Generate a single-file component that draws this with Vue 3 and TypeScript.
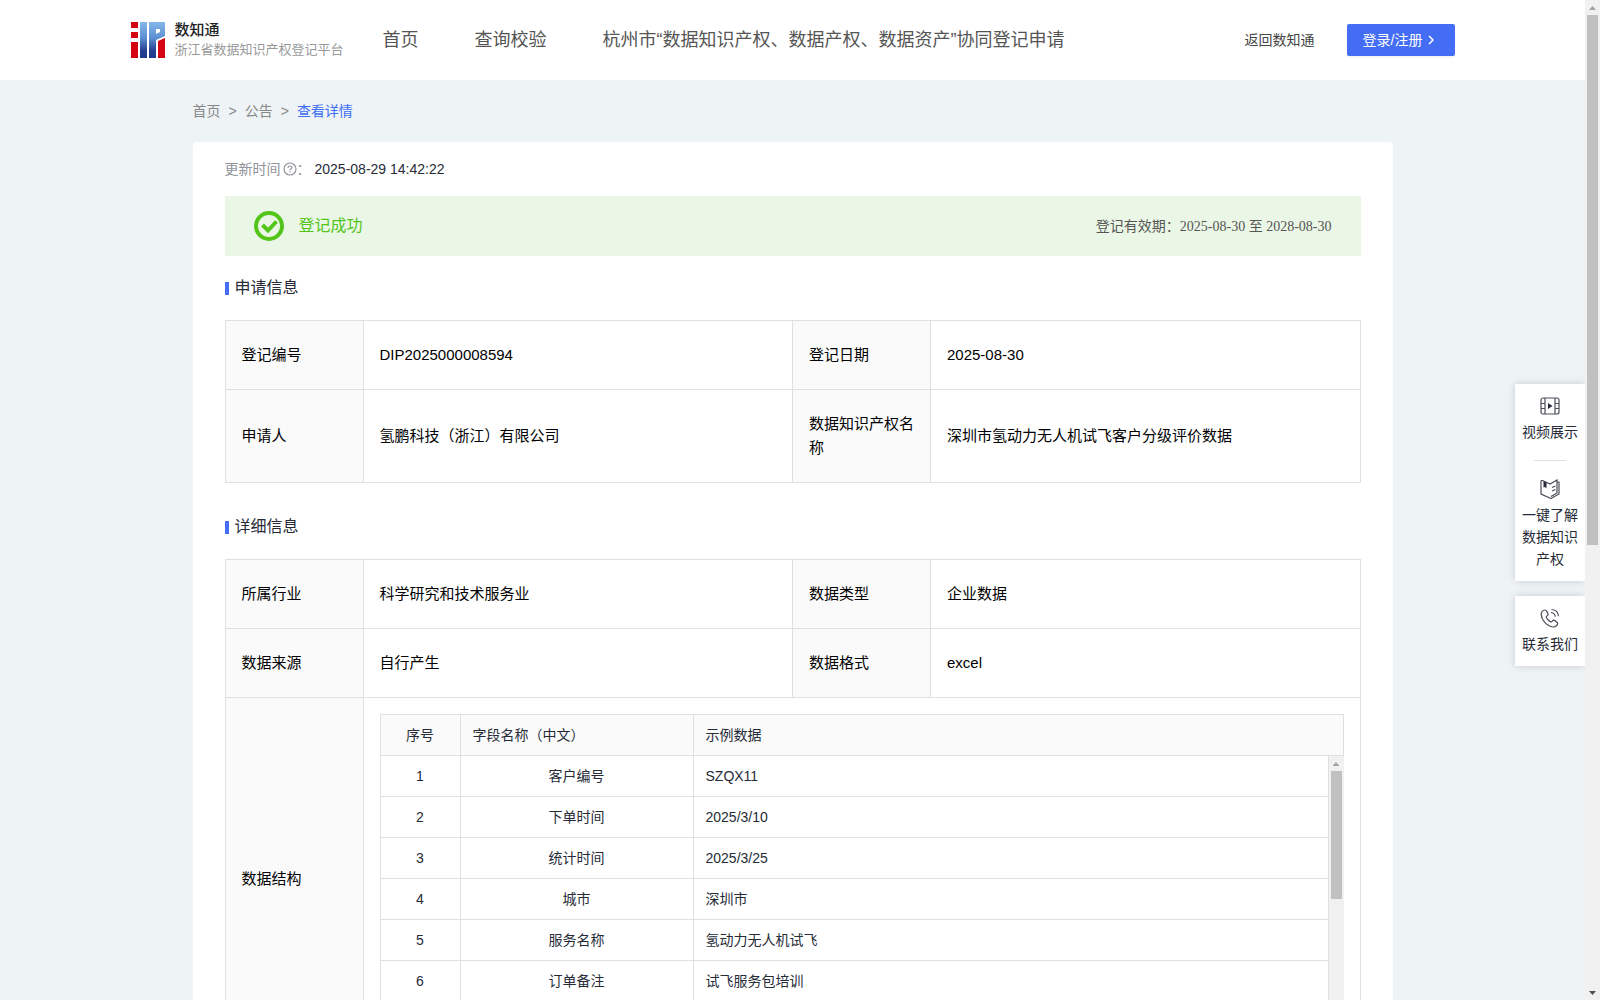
<script setup lang="ts">
interface InfoRow {
  cells: [string, string][]
}

interface FieldRow {
  id: number
  name: string
  sample: string
}

const navItems: string[] = ['首页', '查询校验', '杭州市“数据知识产权、数据产权、数据资产”协同登记申请']

const applyRows: InfoRow[] = [
  { cells: [['登记编号', 'DIP2025000008594'], ['登记日期', '2025-08-30']] },
  { cells: [['申请人', '氢鹏科技（浙江）有限公司'], ['数据知识产权名称', '深圳市氢动力无人机试飞客户分级评价数据']] },
]

const detailRows: InfoRow[] = [
  { cells: [['所属行业', '科学研究和技术服务业'], ['数据类型', '企业数据']] },
  { cells: [['数据来源', '自行产生'], ['数据格式', 'excel']] },
]

const fields: FieldRow[] = [
  { id: 1, name: '客户编号', sample: 'SZQX11' },
  { id: 2, name: '下单时间', sample: '2025/3/10' },
  { id: 3, name: '统计时间', sample: '2025/3/25' },
  { id: 4, name: '城市', sample: '深圳市' },
  { id: 5, name: '服务名称', sample: '氢动力无人机试飞' },
  { id: 6, name: '订单备注', sample: '试飞服务包培训' },
]
</script>

<template>
  <div class="app">
    <div class="page">
      <header class="header">
        <div class="header-inner">
          <a class="brand" href="#">
            <svg class="logo" viewBox="0 0 34 36" aria-hidden="true">
              <defs>
                <linearGradient id="blue" gradientUnits="userSpaceOnUse" x1="0" y1="0" x2="0" y2="36">
                  <stop offset="0" stop-color="#86b8ea" />
                  <stop offset="0.45" stop-color="#5b8ed0" />
                  <stop offset="0.8" stop-color="#24408f" />
                  <stop offset="1" stop-color="#1f3a88" />
                </linearGradient>
              </defs>
              <path fill="#d40511" d="M0 0h7v6H0zM0 10h7v6H0zM0 20h7v16H0zM27 19l7-3v20h-7z" />
              <path fill="url(#blue)" d="M9 0h7v36H9z" />
              <path fill="url(#blue)" fill-rule="evenodd" d="M18 0h16v14l-9 4v18h-7zM25 7v5l4-2V7z" />
            </svg>
            <span class="brand-text">
              <strong>数知通</strong>
              <small>浙江省数据知识产权登记平台</small>
            </span>
          </a>
          <nav class="nav">
            <a v-for="item in navItems" :key="item" href="#">{{ item }}</a>
          </nav>
          <a class="back" href="#">返回数知通</a>
          <button class="login" type="button">
            登录/注册
            <svg viewBox="0 0 12 12" aria-hidden="true"><path d="M4 2l4 4-4 4" /></svg>
          </button>
        </div>
      </header>

      <main class="main">
        <div class="crumbs">
          <a href="#">首页</a><span>&gt;</span><a href="#">公告</a><span>&gt;</span><a class="current" href="#">查看详情</a>
        </div>

        <section class="card">
          <div class="updated">
            <span>更新时间</span>
            <svg viewBox="0 0 14 14" aria-hidden="true">
              <circle cx="7" cy="7" r="6" />
              <path d="M5 5.800Q5 4 7 4t2 1.600Q9 6.600 7 7.500v.8M7 9.300v1.200" />
            </svg>
            <span class="colon">：</span>
            <time>2025-08-29 14:42:22</time>
          </div>

          <div class="banner">
            <svg viewBox="0 0 30 30" aria-hidden="true">
              <circle cx="15" cy="15" r="13" />
              <path d="M8.500 14l5.500 5.500 8.500-9" />
            </svg>
            <span class="status">登记成功</span>
            <span class="validity">登记有效期：<time>2025-08-30 至 2028-08-30</time></span>
          </div>

          <h2>申请信息</h2>
          <table class="info">
            <colgroup><col class="c-label" /><col /><col class="c-label" /><col /></colgroup>
            <tbody>
              <tr v-for="(row, i) in applyRows" :key="i">
                <template v-for="cell in row.cells" :key="cell[0]">
                  <th scope="row">{{ cell[0] }}</th>
                  <td>{{ cell[1] }}</td>
                </template>
              </tr>
            </tbody>
          </table>

          <h2>详细信息</h2>
          <table class="info">
            <colgroup><col class="c-label" /><col /><col class="c-label" /><col /></colgroup>
            <tbody>
              <tr v-for="(row, i) in detailRows" :key="i">
                <template v-for="cell in row.cells" :key="cell[0]">
                  <th scope="row">{{ cell[0] }}</th>
                  <td>{{ cell[1] }}</td>
                </template>
              </tr>
              <tr>
                <th scope="row">数据结构</th>
                <td class="nested" colspan="3">
                  <table class="fields fields-head">
                    <colgroup><col class="f-no" /><col class="f-name" /><col /></colgroup>
                    <thead>
                      <tr>
                        <th class="center" scope="col">序号</th>
                        <th scope="col">字段名称（中文）</th>
                        <th scope="col">示例数据</th>
                      </tr>
                    </thead>
                  </table>
                  <div class="fields-body">
                    <table class="fields">
                      <colgroup><col class="f-no" /><col class="f-name" /><col /></colgroup>
                      <tbody>
                        <tr v-for="f in fields" :key="f.id">
                          <td class="center">{{ f.id }}</td>
                          <td class="center">{{ f.name }}</td>
                          <td>{{ f.sample }}</td>
                        </tr>
                      </tbody>
                    </table>
                    <div class="bar" aria-hidden="true">
                      <i class="arrow up"></i>
                      <i class="thumb thumb-fields"></i>
                      <i class="arrow down"></i>
                    </div>
                  </div>
                </td>
              </tr>
            </tbody>
          </table>
        </section>
      </main>
    </div>

    <aside class="float">
      <div class="panel">
        <a class="tool" href="#">
          <svg viewBox="0 0 20 20" aria-hidden="true">
            <rect x="1" y="2" width="18" height="16" rx="2" />
            <path d="M5 2v16M15 2v16M1 7.500h4M1 12.500h4M15 7.500h4M15 12.500h4" />
            <path class="solid" d="M8 7l4.500 3L8 13z" />
          </svg>
          视频展示
        </a>
        <hr />
        <a class="tool" href="#">
          <svg viewBox="0 0 20 20" aria-hidden="true">
            <path d="M1 1.500v13.500l10 4.500 8-4.500V3h-1.500M1 1.500h1.500l7.500 3.500 7-4v13l-6 3.500M12 8.500l3.500-1.500M12 12l3.500-1.500" />
            <path class="solid" d="M3.500 2l3 1.500v6L5 8l-1.500.5z" />
          </svg>
          一键了解数据知识产权
        </a>
      </div>
      <div class="panel">
        <a class="tool" href="#">
          <svg viewBox="0 0 20 20" aria-hidden="true">
            <path d="M5 2C3 2 1 4 1.200 6.500c.5 6 6 12 12.500 12.500 2 0 4-2 4-3.500 0-1-3-3.300-4-3.300-1.200 0-1.700 1.800-2.700 1.600C9 13.300 6.500 10.500 6.200 9c0-1 1.900-1.300 1.900-2.500C8 5.500 6.500 2 5 2z" />
            <path d="M11 4.500c2.500.3 4 2 4.200 4.200M11.500 1.500c4 .3 6.800 3 7 6.800" />
          </svg>
          联系我们
        </a>
      </div>
    </aside>

    <div class="bar" aria-hidden="true">
      <i class="arrow up"></i>
      <i class="thumb thumb-page"></i>
      <i class="arrow down active"></i>
    </div>
  </div>
</template>

<style>
body {
  margin: 0;
}
</style>

<style scoped>
.app {
  position: relative;
  display: flex;
  height: 100vh;
  background: #eef3f6;
  color: #262b37;
  font: 14px/22px "Liberation Sans", "Noto Sans CJK SC", sans-serif;
}

.app *,
.app *::before {
  box-sizing: border-box;
}

a {
  color: inherit;
  text-decoration: none;
}

.page {
  flex: 1;
  min-width: 0;
  overflow-y: auto;
  scrollbar-width: none;
}

.header {
  padding: 0 24px;
  background: #fff;
}

.header-inner {
  display: flex;
  align-items: center;
  max-width: 1324px;
  height: 80px;
  margin: 0 auto;
  white-space: nowrap;
}

.brand {
  display: flex;
  align-items: center;
  gap: 10px;
  width: 252px;
}

.logo {
  width: 34px;
  height: 36px;
}

.brand-text {
  display: flex;
  flex-direction: column;
}

.brand-text strong {
  color: #222;
  font-size: 15px;
  font-weight: 500;
  line-height: 20px;
}

.brand-text small {
  color: #999;
  font-size: 13px;
  line-height: 20px;
}

.nav {
  display: flex;
  flex: 1;
  gap: 56px;
  color: #555;
  font-size: 18px;
}

.back {
  margin-right: 32px;
  color: #444;
}

.login {
  display: flex;
  align-items: center;
  gap: 3px;
  width: 108px;
  height: 32px;
  padding: 0 16px;
  border: 0;
  border-radius: 2px;
  background: #446df6;
  box-shadow: 0 2px 0 rgba(0, 0, 0, 0.04);
  color: #fff;
  font: inherit;
}

.login svg {
  width: 12px;
  height: 12px;
  fill: none;
  stroke: currentColor;
  stroke-width: 1.5;
}

.main {
  max-width: 1200px;
  margin: 0 auto;
}

.crumbs {
  display: flex;
  gap: 8px;
  padding: 20px 0;
  color: #888;
}

.crumbs .current {
  color: #3d6ef5;
}

.card {
  padding: 16px 32px 32px;
  border-radius: 4px;
  background: #fff;
}

.updated {
  display: flex;
  align-items: center;
  color: #909399;
}

.updated svg {
  width: 14px;
  height: 14px;
  margin-left: 2px;
  fill: none;
  stroke: currentColor;
  stroke-width: 1.2;
}

.colon {
  width: 18px;
}

.updated time {
  color: #262b37;
}

.banner {
  display: flex;
  align-items: center;
  height: 60px;
  margin: 16px 0 21px;
  padding: 0 29px;
  background: #ebf7e6;
}

.banner svg {
  width: 30px;
  height: 30px;
  fill: none;
  stroke: #52c41a;
  stroke-width: 4;
}

.status {
  flex: 1;
  margin-left: 15px;
  color: #52c41a;
  font-size: 16px;
}

.validity {
  color: #555;
}

.validity time {
  font-family: "Liberation Serif", "Noto Sans CJK SC", serif;
}

h2 {
  display: flex;
  align-items: center;
  gap: 6px;
  margin: 0 0 21px;
  font-size: 16px;
  font-weight: 400;
  line-height: 22px;
}

h2::before {
  width: 4px;
  height: 13px;
  background: #446df6;
  content: "";
}

table {
  width: 100%;
  border-collapse: collapse;
  table-layout: fixed;
}

th,
td {
  border: 1px solid #e0e0e0;
  font-weight: 400;
  text-align: left;
}

th {
  background: #fafafa;
}

.info {
  margin-bottom: 33px;
  color: #000;
  font-size: 15px;
  line-height: 24px;
}

.info th,
.info td {
  padding: 22px 16px;
}

.info th {
  padding-right: 12px;
}

.c-label {
  width: 138px;
}

.info td.nested {
  padding: 16px;
}

.fields {
  color: #262b37;
  font-size: 14px;
  line-height: 24px;
}

.info .fields th,
.info .fields td {
  padding: 8px 12px;
}

.info .fields .center {
  text-align: center;
}

.f-no {
  width: 80px;
}

.f-name {
  width: 233px;
}

.fields-body {
  display: flex;
  height: 287px;
  overflow: hidden;
}

.fields-body tr:first-child td {
  border-top: 0;
}

.fields-body .fields {
  flex: 1;
  align-self: flex-start;
}

.bar {
  display: flex;
  flex: none;
  flex-direction: column;
  align-items: center;
  width: 15px;
  background: #f1f1f1;
}

.arrow {
  flex: none;
  width: 7px;
  height: 4px;
  margin: 6px 0 5px;
  background: #a3a3a3;
  clip-path: polygon(50% 0, 100% 100%, 0 100%);
}

.arrow.down {
  margin-top: auto;
  clip-path: polygon(0 0, 100% 0, 50% 100%);
}

.arrow.active {
  background: #505050;
}

.thumb {
  width: 11px;
  background: #c1c1c1;
}

.thumb-fields {
  height: 128px;
}

.thumb-page {
  height: 53%;
}

.float {
  position: absolute;
  top: 384px;
  right: 15px;
  display: flex;
  flex-direction: column;
  gap: 15px;
  width: 70px;
}

.panel {
  padding: 12px 7px 11px;
  background: #fff;
  box-shadow: 0 0 8px rgba(0, 0, 0, 0.16);
  clip-path: inset(-12px 0 -12px -12px);
}

.tool {
  display: flex;
  flex-direction: column;
  align-items: center;
  gap: 5px;
  text-align: center;
}

.tool svg {
  width: 20px;
  height: 20px;
  fill: none;
  stroke: #4a4e58;
  stroke-width: 1.2;
}

.tool .solid {
  fill: #262b37;
  stroke: none;
}

.panel hr {
  width: 32px;
  height: 1px;
  margin: 17px auto 18px;
  border: 0;
  background: #dcdfe6;
}
</style>
